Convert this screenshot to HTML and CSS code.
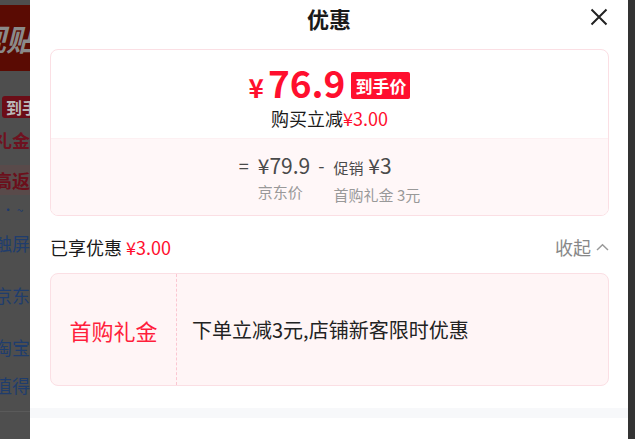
FILE: index.html
```html
<!DOCTYPE html>
<html lang="zh-CN">
<head>
    <meta charset="UTF-8">
    <meta name="viewport" content="width=device-width, initial-scale=1.0">
    <title>优惠</title>
    <link rel="stylesheet" href="styles.css">
</head>
<body>
    <div class="page">
        <div class="page-main">
            <div class="banner"><span>现贴</span></div>
            <div class="tag">到手价</div>
            <div class="row row-red">礼金券</div>
            <div class="band"><span>高返佣</span></div>
            <div class="row row-dots">· ~</div>
            <div class="row row-blue">触屏页</div>
            <div class="row row-blue row-gap">京东联盟</div>
            <div class="row row-blue row-gap">淘宝</div>
            <div class="row row-blue">值得买</div>
            <div class="page-line"></div>
        </div>
        <div class="page-scroll"></div>
    </div>

    <div class="drawer">
        <div class="drawer-head">
            <h1 class="drawer-title">优惠</h1>
            <span class="drawer-close">
                <svg width="18" height="18" viewBox="0 0 18 18">
                    <path d="M1.5 1.5 L16.5 16.5 M16.5 1.5 L1.5 16.5" stroke="#222" stroke-width="2" fill="none"/>
                </svg>
            </span>
        </div>

        <div class="drawer-body">
            <!-- 价格卡片 -->
            <div class="price-card">
                <div class="price-top">
                    <div class="price-line">
                        <span class="price"><span class="price-sign">¥</span>76.9</span>
                        <span class="price-badge">到手价</span>
                    </div>
                    <div class="price-sub">购买立减<span class="red">¥3.00</span></div>
                </div>
                <div class="price-bottom">
                    <div class="calc">
                        <span class="calc-op">=</span>
                        <div class="calc-item">
                            <div class="calc-value">¥79.9</div>
                            <div class="calc-label">京东价</div>
                        </div>
                        <span class="calc-op">-</span>
                        <div class="calc-item">
                            <div class="calc-value"><span class="calc-small">促销</span> ¥3</div>
                            <div class="calc-label">首购礼金 3元</div>
                        </div>
                    </div>
                </div>
            </div>

            <div class="enjoy">
                <div class="enjoy-text">已享优惠 <span class="red">¥3.00</span></div>
                <div class="enjoy-toggle">收起
                    <svg width="13" height="8" viewBox="0 0 13 8">
                        <path d="M1 7 L6.5 1.8 L12 7" stroke="#999" stroke-width="1.5" fill="none"/>
                    </svg>
                </div>
            </div>

            <!-- 优惠券 -->
            <div class="coupon">
                <div class="coupon-name">首购礼金</div>
                <div class="coupon-desc">下单立减3元,店铺新客限时优惠</div>
            </div>
        </div>

        <div class="drawer-gap"></div>
    </div>
</body>
</html>
```

FILE: styles.css
```css
* {
    box-sizing: border-box;
}

body {
    margin: 0;
    font-family: "Noto Sans CJK SC", "Noto Sans", sans-serif;
    overflow: hidden;
}

/* 背景页面 (遮罩下) */
.page {
    display: flex;
    height: 439px;
}

.page-main {
    flex: 1;
    background-color: #4e4e4e;
    overflow: hidden;
    white-space: nowrap;
}

.page-scroll {
    width: 7px;
    background-color: #333;
}

.banner {
    margin-top: 5px;
    height: 66px;
    background-color: #5a0b03;
    padding-top: 13px;
}

.banner span {
    display: block;
    margin-left: -24px;
    font-size: 30px;
    font-weight: bold;
    font-style: italic;
    color: #8a8a8a;
    line-height: 40px;
}

.tag {
    display: inline-block;
    margin: 25px 0 0 2px;
    padding: 0 4px;
    height: 22px;
    line-height: 22px;
    background-color: #6b0d17;
    color: #b9b9b9;
    font-size: 16px;
    font-weight: bold;
    border-radius: 3px;
}

.row {
    margin-left: -6px;
    font-size: 18px;
    line-height: 24px;
}

.row-red {
    margin-top: 9px;
    color: #6e1220;
    font-weight: bold;
}

.band {
    margin-top: 13px;
    height: 30px;
    background-color: #594a4a;
}

.band span {
    display: block;
    margin-left: -6px;
    line-height: 30px;
    font-size: 18px;
    font-weight: bold;
    color: #6b0f1b;
}

.row-dots {
    margin-top: 8px;
    margin-left: 2px;
    color: #1d3a6c;
    font-size: 12px;
    line-height: 14px;
}

.row-blue {
    margin-top: 14px;
    color: #1f3d6d;
}

.row-gap {
    margin-top: 28px;
}

.page-line {
    margin-top: 14px;
    height: 1px;
    background-color: #5a5a5a;
}

/* 抽屉 */
.drawer {
    position: absolute;
    top: 0;
    left: 30px;
    width: 598px;
    height: 439px;
    background-color: #fff;
}

.drawer-head {
    position: relative;
    height: 36px;
    display: flex;
    align-items: center;
    justify-content: center;
}

.drawer-title {
    margin: 0;
    font-size: 22px;
    font-weight: bold;
    color: #1a1a1a;
    line-height: 36px;
}

.drawer-close {
    position: absolute;
    right: 20px;
    top: 8px;
    display: flex;
}

.drawer-body {
    padding: 13px 19px 0 20px;
}

.red {
    color: #ff0f2e;
}

/* 价格卡片 */
.price-card {
    border: 1px solid #fbdfe4;
    border-radius: 8px;
    overflow: hidden;
}

.price-top {
    height: 88px;
    padding-top: 11px;
    text-align: center;
}

.price-line {
    display: flex;
    justify-content: center;
    align-items: center;
    height: 46px;
}

.price {
    color: #ff0f2e;
    font-size: 37px;
    font-weight: bold;
    line-height: 46px;
}

.price-sign {
    font-size: 26px;
    font-weight: bold;
    margin-right: 4px;
}

.price-badge {
    margin-left: 6px;
    margin-top: 2px;
    padding: 0 4px;
    height: 27px;
    line-height: 27px;
    background-color: #ff0f2e;
    color: #fff;
    font-size: 17px;
    font-weight: bold;
    border-radius: 2px;
}

.price-sub {
    font-size: 18px;
    line-height: 22px;
    color: #1a1a1a;
}

.price-bottom {
    height: 77px;
    background-color: #fff7f8;
    border-top: 1px solid #fdf0f2;
    padding-top: 13px;
}

.calc {
    display: flex;
    justify-content: center;
    color: #4a4a4a;
}

.calc-op {
    font-size: 18px;
    line-height: 26px;
    padding: 0 9px 0 0;
}

.calc-item {
    padding-right: 8px;
}

.calc-item:last-child {
    padding-right: 0;
}

.calc-value {
    font-size: 21px;
    line-height: 26px;
}

.calc-small {
    font-size: 15px;
}

.calc-label {
    margin-top: 3px;
    font-size: 15px;
    color: #999;
    line-height: 22px;
}

/* 已享优惠 */
.enjoy {
    display: flex;
    justify-content: space-between;
    align-items: center;
    height: 57px;
    padding-top: 5px;
    font-size: 18px;
}

.enjoy-text {
    color: #1a1a1a;
}

.enjoy-toggle {
    color: #888;
    display: flex;
    align-items: center;
    gap: 5px;
}

/* 优惠券 */
.coupon {
    display: flex;
    height: 113px;
    background-color: #fff5f6;
    border: 1px solid #fbdfe4;
    border-radius: 8px;
}

.coupon-name {
    width: 126px;
    display: flex;
    align-items: center;
    justify-content: center;
    border-right: 1px dashed #fbc7d2;
    color: #ff1e3c;
    font-size: 22px;
}

.coupon-desc {
    display: flex;
    align-items: center;
    padding-left: 15px;
    font-size: 20px;
    color: #222;
}

.drawer-gap {
    margin-top: 22px;
    height: 10px;
    background-color: #f7f8fa;
}
```
